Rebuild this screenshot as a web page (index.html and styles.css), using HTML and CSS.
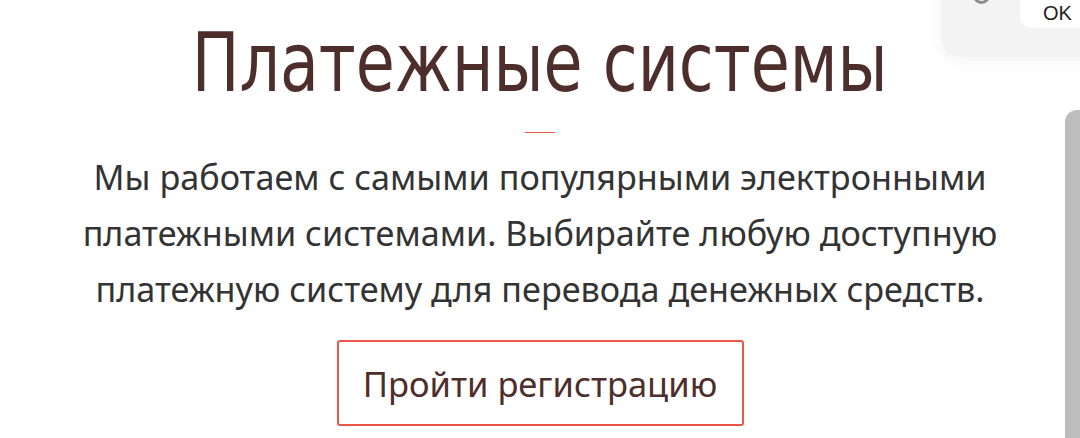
FILE: index.html
```html
<!DOCTYPE html>
<html lang="ru">
<head>
<meta charset="utf-8">
<title>Платежные системы</title>
<link rel="stylesheet" href="styles.css">
</head>
<body>
<section class="payments">
  <h1 class="payments__title">Платежные системы</h1>
  <span class="payments__rule"></span>
  <p class="payments__text">Мы работаем с самыми популярными электронными платежными системами. Выбирайте любую доступную платежную систему для перевода денежных средств.</p>
  <a class="payments__button" href="#">Пройти регистрацию</a>
</section>

<div class="cookie">
  <span class="cookie__ring"></span>
  <button class="cookie__ok">OK</button>
</div>

<div class="scrollbar"></div>
</body>
</html>
```
FILE: styles.css
```css
* { box-sizing: border-box; }
html, body { margin: 0; padding: 0; background: #fff; overflow: hidden; }
body { width: 1080px; height: 438px; position: relative; font-family: "Noto Sans", "DejaVu Sans", sans-serif; }

.payments {
  display: flex;
  flex-direction: column;
  align-items: center;
  padding-top: 18px;
}
.payments__title {
  margin: 0;
  font-family: "DejaVu Sans Condensed", "DejaVu Sans", sans-serif;
  font-stretch: condensed;
  font-weight: 400;
  font-size: 82px;
  line-height: 90px;
  color: #4e2e2b;
  white-space: nowrap;
  transform: scaleX(0.86);
}
.payments__rule {
  display: block;
  width: 30px;
  height: 1px;
  background: #e8574a;
  margin-top: 24px;
}
.payments__text {
  margin: 16px 0 0;
  width: 960px;
  text-align: center;
  font-size: 34.2px;
  line-height: 56px;
  color: #333;
}
.payments__button {
  display: flex;
  align-items: center;
  justify-content: center;
  margin-top: 23px;
  width: 407px;
  height: 86px;
  border: 2px solid #e8574a;
  border-radius: 3px;
  font-size: 34.5px;
  color: #4e2e2b;
  text-decoration: none;
}

.cookie {
  position: absolute;
  left: 942px;
  top: -30px;
  width: 170px;
  height: 87px;
  background: #f3f3f3;
  border-radius: 16px;
  box-shadow: 0 2px 18px rgba(0,0,0,0.06);
}
.cookie__ring {
  position: absolute;
  left: 31px;
  top: 17px;
  width: 17px;
  height: 17px;
  border: 3px solid #8c8c8c;
  border-radius: 50%;
}
.cookie__ok {
  position: absolute;
  left: 78px;
  top: 0;
  width: 120px;
  height: 58px;
  padding: 28px 0 0 23px;
  text-align: left;
  border: none;
  border-radius: 12px;
  background: #fff;
  font-family: "Liberation Sans", Arial, sans-serif;
  font-size: 20px;
  line-height: 24px;
  color: #222;
}

.scrollbar {
  position: absolute;
  left: 1065px;
  top: 110px;
  width: 15px;
  height: 340px;
  background: #bdbdbd;
  border-radius: 12px 0 0 0;
}
```
